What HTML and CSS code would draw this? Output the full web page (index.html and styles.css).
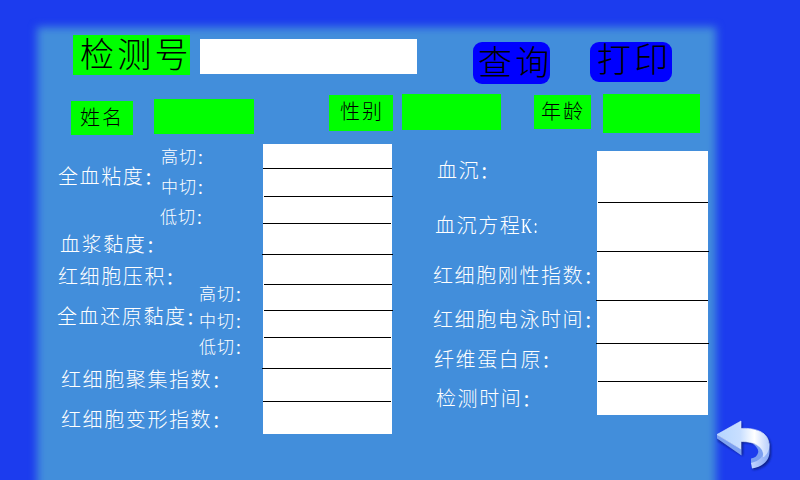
FILE: index.html
```html
<!DOCTYPE html>
<html lang="zh-CN">
<head>
<meta charset="utf-8">
<title>检测</title>
<link rel="stylesheet" href="styles.css">
</head>
<body>
<div class="screen">
  <main class="panel">
    <header class="search">
      <label class="search-label">检测号</label>
      <div class="search-input"></div>
      <button class="btn btn-query">查询</button>
      <button class="btn btn-print">打印</button>
    </header>
    <section class="patient">
      <div class="tag tag-name">姓名</div>
      <div class="value value-name"></div>
      <div class="tag tag-sex">性别</div>
      <div class="value value-sex"></div>
      <div class="tag tag-age">年龄</div>
      <div class="value value-age"></div>
    </section>
    <section class="results">
      <div class="labels labels-left">
        <div class="group group-blood">
          <div class="label">全血粘度<span class="colon">：</span></div>
          <div class="subs">
            <div class="sub">高切<span class="colon">：</span></div>
            <div class="sub">中切<span class="colon">：</span></div>
            <div class="sub">低切<span class="colon">：</span></div>
          </div>
        </div>
        <div class="label plasma">血浆黏度<span class="colon">：</span></div>
        <div class="label hematocrit">红细胞压积<span class="colon">：</span></div>
        <div class="group group-reduced">
          <div class="label">全血还原黏度<span class="colon">：</span></div>
          <div class="subs">
            <div class="sub">高切<span class="colon">：</span></div>
            <div class="sub">中切<span class="colon">：</span></div>
            <div class="sub">低切<span class="colon">：</span></div>
          </div>
        </div>
        <div class="label aggregation">红细胞聚集指数<span class="colon">：</span></div>
        <div class="label deformation">红细胞变形指数<span class="colon">：</span></div>
      </div>
      <div class="sheet sheet-left">
        <hr><hr><hr><hr><hr><hr><hr><hr><hr>
      </div>
      <div class="labels labels-right">
        <div class="label esr">血沉<span class="colon">：</span></div>
        <div class="label esr-k">血沉方程<span class="latin">K:</span></div>
        <div class="label rigidity">红细胞刚性指数<span class="colon">：</span></div>
        <div class="label electro">红细胞电泳时间<span class="colon">：</span></div>
        <div class="label fibrinogen">纤维蛋白原<span class="colon">：</span></div>
        <div class="label test-time">检测时间<span class="colon">：</span></div>
      </div>
      <div class="sheet sheet-right">
        <hr><hr><hr><hr><hr>
      </div>
    </section>
  </main>
  <svg class="back" width="60" height="56" viewBox="714 418 60 56">
    <defs>
      <linearGradient id="face" x1="0" y1="0" x2="1" y2="0">
        <stop offset="0" stop-color="#b4d6ff"/>
        <stop offset=".45" stop-color="#c9dfff"/>
        <stop offset=".72" stop-color="#ffffff"/>
        <stop offset="1" stop-color="#b9cffc"/>
      </linearGradient>
      <linearGradient id="rim" x1="0" y1="0" x2="1" y2="0">
        <stop offset="0" stop-color="#c4d6ff"/>
        <stop offset="1" stop-color="#86a8f4"/>
      </linearGradient>
      <filter id="soft" x="-20%" y="-20%" width="140%" height="140%"><feGaussianBlur stdDeviation="1"/></filter>
    </defs>
    <path class="shade" filter="url(#soft)" d="M718 437 742 422V430C758 429 771 435 771 447V454C771 463 763 469 753 470L752 464C758 462 765 458 764 451 762 445 755 443 743 443V456L718 441Z"/>
    <path fill="#7ea2f0" d="M717 434.500 741.500 449V455.500L717 438.500Z"/>
    <path fill="#7b9ff0" d="M753 444C757 447 759 450 758 453 757 456 755 458 751 458.500V463.500C760 462 765 458 765 451 762 446 757 444 753 444Z"/>
    <path fill="url(#rim)" d="M751 463C760 461 764 456 764 450L769.500 443V452C769.500 461 762 467 752 468.500Z"/>
    <path fill="url(#face)" stroke="#dceaff" stroke-width=".6" d="M717 434.500 741 421V428.500C757 427.500 769 433 769 445 769 450 767 454 763.500 457 764.500 447 755 441.500 741 441.500V449Z"/>
  </svg>
</div>
</body>
</html>
```
FILE: styles.css
```css
* { box-sizing: border-box; }

body {
  margin: 0;
  font-family: "Noto Sans CJK SC", sans-serif;
  font-weight: 300;
}

.screen {
  width: 800px;
  height: 480px;
  display: flex;
  overflow: hidden;
  background: #1c3cee;
}

.panel {
  position: relative;
  z-index: 0;
  width: 714px;
  height: 480px;
  flex: none;
}

/* soft-edged backdrop */
.panel::before {
  content: "";
  position: absolute;
  z-index: -1;
  inset: 27px -2px -20px 37px;
  background: #428edb;
  filter: blur(4px);
}

.search {
  display: flex;
  align-items: flex-start;
  height: 94px;
  padding: 35px 0 0 73px;
}

.search-label {
  width: 117px;
  height: 40px;
  padding-left: 7px;
  background: #0f0;
  font-size: 34px;
  line-height: 36px;
  letter-spacing: 3.200px;
  white-space: nowrap;
}

.search-input {
  width: 217px;
  height: 35px;
  margin: 4px 56px 0 10px;
  background: #fff;
}

.btn {
  margin: 7px 0 0;
  padding: 0 0 5px 5px;
  border: 0;
  border-radius: 9px;
  background: #00f;
  color: #000;
  font: 300 34px/37px "Noto Sans CJK SC", sans-serif;
  letter-spacing: 3.200px;
  text-align: left;
  white-space: nowrap;
}

.btn-query { width: 77px; height: 42px; margin-right: 40px; }
.btn-print { width: 82px; height: 40px; padding: 0 0 8px 7px; line-height: 32px; }

.patient {
  display: flex;
  align-items: flex-start;
  height: 46px;
  padding-left: 71px;
}

.tag, .value { flex: none; background: #0f0; }

.tag {
  font-size: 20px;
  letter-spacing: 2px;
  white-space: nowrap;
}

.tag-name { width: 62px; height: 34px; margin-top: 7px; padding-left: 9px; line-height: 31px; }
.tag-sex { width: 64px; height: 36px; margin: 1px 0 0 75px; padding-left: 11px; line-height: 32px; }
.tag-age { width: 57px; height: 34px; margin: 1px 0 0 33px; padding-left: 7px; line-height: 32px; }
.value-name { width: 100px; height: 35px; margin: 5px 0 0 21px; }
.value-sex { width: 99px; height: 36px; margin-left: 9px; }
.value-age { width: 97px; height: 39px; margin-left: 12px; }

.results {
  display: flex;
  align-items: flex-start;
  color: #fff;
}

.labels { flex: none; }
.labels-left { width: 206px; margin-left: 57px; }
.labels-right { width: 164px; margin-left: 41px; padding-top: 21px; }

.label {
  font-size: 20px;
  line-height: 18px;
  letter-spacing: 1.600px;
  white-space: nowrap;
}

.sub {
  font-size: 17px;
  line-height: 16px;
  letter-spacing: 1px;
  white-space: nowrap;
}

.colon {
  font-size: .8em;
  font-weight: 500;
  line-height: 1;
  letter-spacing: 0;
  font-feature-settings: "halt";
}

.group { display: flex; }
.group .label { flex: none; }
.subs { flex: none; }

.group-blood { height: 95px; }
.group-blood .label { width: 104px; margin-top: 27px; padding-left: 1px; }
.group-blood .sub { margin-top: 8px; }
.group-blood .sub + .sub { margin-top: 13px; }
.group-blood .sub:last-child { margin: 14px 0 0 -1px; }

.plasma { padding-left: 3px; }
.hematocrit { margin-top: 14px; padding-left: 1px; }

.group-reduced { height: 85px; }
.group-reduced .label { width: 142px; margin-top: 22px; }
.group-reduced .sub + .sub { margin-top: 10px; }

.aggregation { padding-left: 4px; }
.deformation { margin-top: 22px; padding-left: 4px; }

.esr { padding-left: 4px; }
.esr-k { margin-top: 37px; padding-left: 2px; }
.rigidity { margin-top: 31px; }
.electro { margin-top: 26px; }
.fibrinogen { margin-top: 22px; padding-left: 1px; }
.test-time { margin-top: 21px; padding-left: 3px; }

.latin {
  display: inline-block;
  font-family: "Liberation Serif", serif;
  font-size: 22px;
  font-weight: 400;
  letter-spacing: 2px;
  line-height: 18px;
  transform: scaleX(.7);
  transform-origin: left;
}

.sheet {
  position: relative;
  flex: none;
  display: flow-root;
  background: #fff;
}

.sheet-left { width: 129px; height: 290px; margin-top: 4px; }
.sheet-right { width: 111px; height: 264px; margin-top: 11px; }

.sheet hr {
  height: 1px;
  border: 0;
  background: #000;
}

.sheet-left hr:nth-child(1) { margin: 24px 0 0; }
.sheet-left hr:nth-child(2) { margin: 27px -1px 0 1px; }
.sheet-left hr:nth-child(3) { margin: 26px 1px 0 0; }
.sheet-left hr:nth-child(4) { margin: 30px -1px 0; }
.sheet-left hr:nth-child(5) { margin: 29px 0 0 1px; }
.sheet-left hr:nth-child(6) { margin: 25px -1px 0 1px; }
.sheet-left hr:nth-child(7) { margin: 26px 1px 0; }
.sheet-left hr:nth-child(8) { margin: 30px 1px 0 -1px; }
.sheet-left hr:nth-child(9) { margin: 32px 1px 0 0; }

.sheet-right hr:nth-child(1) { margin: 51px 0 0 1px; }
.sheet-right hr:nth-child(2) { margin: 48px -1px 0 0; }
.sheet-right hr:nth-child(3) { margin: 48px 0 0 -1px; }
.sheet-right hr:nth-child(4) { margin: 42px -1px 0; }
.sheet-right hr:nth-child(5) { margin: 37px 1px 0; }

.back {
  position: relative;
  flex: none;
  align-self: flex-end;
  margin-bottom: 6px;
}

.shade { fill: #10208c; }
```
